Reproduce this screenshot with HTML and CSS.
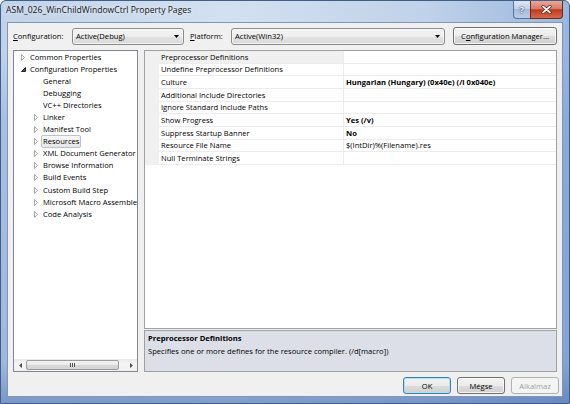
FILE: index.html
```html
<!DOCTYPE html>
<html>
<head>
<meta charset="utf-8">
<title>Property Pages</title>
<link rel="stylesheet" href="styles.css">
</head>
<body>
<div class="window">
  <div class="titlebar">
    <span class="title">ASM_026_WinChildWindowCtrl Property Pages</span>
    <div class="caption-btns">
      <div class="cbtn help">?</div>
      <div class="cbtn close">
        <svg width="11" height="9" viewBox="0 0 11 9"><path d="M2 1.5 L9 7.5 M9 1.5 L2 7.5" stroke="#5a1d12" stroke-width="3.2" stroke-linecap="round"/><path d="M2 1.5 L9 7.5 M9 1.5 L2 7.5" stroke="#ffffff" stroke-width="1.7" stroke-linecap="round"/></svg>
      </div>
    </div>
  </div>
  <div class="client">
    <div class="toprow">
      <span class="lbl lbl-config"><u>C</u>onfiguration:</span>
      <div class="combo combo-config"><span>Active(Debug)</span><svg class="dd" width="5" height="3" viewBox="0 0 5 3"><path d="M0 0 H5 L2.5 3 Z" fill="#000"/></svg></div>
      <span class="lbl lbl-platform"><u>P</u>latform:</span>
      <div class="combo combo-platform"><span>Active(Win32)</span><svg class="dd" width="5" height="3" viewBox="0 0 5 3"><path d="M0 0 H5 L2.5 3 Z" fill="#000"/></svg></div>
      <div class="btn cfgmgr">C<u>o</u>nfiguration Manager...</div>
    </div>
    <div class="main">
      <div class="tree">
        <div class="tree-items">
          <div class="ti l0"><span class="tw"><svg width="4" height="7" viewBox="0 0 4 7"><path d="M0.5 0.5 L3.5 3.5 L0.5 6.5 Z" fill="#fff" stroke="#a7a7a7"/></svg></span><span class="tt">Common Properties</span></div>
          <div class="ti l0"><span class="tw"><svg width="5" height="5" viewBox="0 0 5 5"><path d="M4.5 0.5 L4.5 4.5 L0.5 4.5 Z" fill="#4a4a4a" stroke="#262626"/></svg></span><span class="tt">Configuration Properties</span></div>
          <div class="ti l1"><span class="tw"></span><span class="tt">General</span></div>
          <div class="ti l1"><span class="tw"></span><span class="tt">Debugging</span></div>
          <div class="ti l1"><span class="tw"></span><span class="tt">VC++ Directories</span></div>
          <div class="ti l1"><span class="tw"><svg width="4" height="7" viewBox="0 0 4 7"><path d="M0.5 0.5 L3.5 3.5 L0.5 6.5 Z" fill="#fff" stroke="#a7a7a7"/></svg></span><span class="tt">Linker</span></div>
          <div class="ti l1"><span class="tw"><svg width="4" height="7" viewBox="0 0 4 7"><path d="M0.5 0.5 L3.5 3.5 L0.5 6.5 Z" fill="#fff" stroke="#a7a7a7"/></svg></span><span class="tt">Manifest Tool</span></div>
          <div class="ti l1"><span class="tw"><svg width="4" height="7" viewBox="0 0 4 7"><path d="M0.5 0.5 L3.5 3.5 L0.5 6.5 Z" fill="#fff" stroke="#a7a7a7"/></svg></span><span class="tt selected">Resources</span></div>
          <div class="ti l1"><span class="tw"><svg width="4" height="7" viewBox="0 0 4 7"><path d="M0.5 0.5 L3.5 3.5 L0.5 6.5 Z" fill="#fff" stroke="#a7a7a7"/></svg></span><span class="tt">XML Document Generator</span></div>
          <div class="ti l1"><span class="tw"><svg width="4" height="7" viewBox="0 0 4 7"><path d="M0.5 0.5 L3.5 3.5 L0.5 6.5 Z" fill="#fff" stroke="#a7a7a7"/></svg></span><span class="tt">Browse Information</span></div>
          <div class="ti l1"><span class="tw"><svg width="4" height="7" viewBox="0 0 4 7"><path d="M0.5 0.5 L3.5 3.5 L0.5 6.5 Z" fill="#fff" stroke="#a7a7a7"/></svg></span><span class="tt">Build Events</span></div>
          <div class="ti l1"><span class="tw"><svg width="4" height="7" viewBox="0 0 4 7"><path d="M0.5 0.5 L3.5 3.5 L0.5 6.5 Z" fill="#fff" stroke="#a7a7a7"/></svg></span><span class="tt">Custom Build Step</span></div>
          <div class="ti l1"><span class="tw"><svg width="4" height="7" viewBox="0 0 4 7"><path d="M0.5 0.5 L3.5 3.5 L0.5 6.5 Z" fill="#fff" stroke="#a7a7a7"/></svg></span><span class="tt">Microsoft Macro Assembler</span></div>
          <div class="ti l1"><span class="tw"><svg width="4" height="7" viewBox="0 0 4 7"><path d="M0.5 0.5 L3.5 3.5 L0.5 6.5 Z" fill="#fff" stroke="#a7a7a7"/></svg></span><span class="tt">Code Analysis</span></div>
        </div>
        <div class="hscroll">
          <div class="sarrow"><svg width="3" height="5" viewBox="0 0 3 5"><path d="M3 0 V5 L0 2.5 Z" fill="#4d4d4d"/></svg></div>
          <div class="thumb"><span class="grip"></span><span class="grip"></span><span class="grip"></span></div>
          <div class="strack"></div>
          <div class="sarrow"><svg width="3" height="5" viewBox="0 0 3 5"><path d="M0 0 V5 L3 2.5 Z" fill="#4d4d4d"/></svg></div>
        </div>
      </div>
      <div class="props">
        <div class="grid">
          <div class="row sel"><div class="gut"></div><div class="name">Preprocessor Definitions</div><div class="val"></div></div>
          <div class="row"><div class="gut"></div><div class="name">Undefine Preprocessor Definitions</div><div class="val"></div></div>
          <div class="row"><div class="gut"></div><div class="name">Culture</div><div class="val b">Hungarian (Hungary) (0x40e) (/l 0x040e)</div></div>
          <div class="row"><div class="gut"></div><div class="name">Additional Include Directories</div><div class="val"></div></div>
          <div class="row"><div class="gut"></div><div class="name">Ignore Standard Include Paths</div><div class="val"></div></div>
          <div class="row"><div class="gut"></div><div class="name">Show Progress</div><div class="val b">Yes (/v)</div></div>
          <div class="row"><div class="gut"></div><div class="name">Suppress Startup Banner</div><div class="val b">No</div></div>
          <div class="row"><div class="gut"></div><div class="name">Resource File Name</div><div class="val">$(IntDir)%(Filename).res</div></div>
          <div class="row"><div class="gut"></div><div class="name">Null Terminate Strings</div><div class="val"></div></div>
        </div>
        <div class="desc">
          <div class="desc-title">Preprocessor Definitions</div>
          <div class="desc-text">Specifies one or more defines for the resource compiler. (/d[macro])</div>
        </div>
      </div>
    </div>
    <div class="btnrow">
      <div class="btn ok">OK</div>
      <div class="btn">Mégse</div>
      <div class="btn disabled">Alkalmaz</div>
    </div>
  </div>
</div>
</body>
</html>
```

FILE: styles.css
```css
* { box-sizing: border-box; }
html, body { margin: 0; padding: 0; }
body {
  width: 570px;
  height: 404px;
  overflow: hidden;
  background: #ffffff;
  font-family: "Open Sans", "Noto Sans", sans-serif;
  font-size: 7.6px;
  color: #000;
}

.window {
  width: 570px;
  height: 404px;
  border: 1px solid #3f5e88;
  border-radius: 6px 6px 0 0;
  display: flex;
  flex-direction: column;
  background:
    linear-gradient(to bottom, rgba(80,120,190,0) 0%, rgba(80,120,190,0) 12%, rgba(90,130,195,0.25) 30%, rgba(80,120,190,0.3) 90%, rgba(60,100,170,0.55) 100%),
    linear-gradient(to right, #c2d3e9 0%, #d3e0ef 40%, #c0d2e9 75%, #9ab6dd 100%);
}

.titlebar {
  height: 21px;
  display: flex;
  align-items: flex-start;
  flex: none;
}
.title {
  font-size: 8.6px;
  line-height: 12px;
  padding: 3px 0 0 5px;
  color: #161616;
  text-shadow: 0 0 4px rgba(255,255,255,0.9);
}
.caption-btns {
  margin-left: auto;
  margin-right: 6px;
  display: flex;
}
.cbtn {
  height: 18px;
  display: flex;
  align-items: center;
  justify-content: center;
}
.help {
  width: 17px;
  border: 1px solid #58739a;
  border-top: none;
  border-right: none;
  border-radius: 0 0 0 4px;
  background: linear-gradient(to bottom, #dce6f3 0%, #c2d3e9 45%, #a5bcdc 50%, #b7cce6 100%);
  color: #fff;
  font-weight: bold;
  font-size: 9px;
  text-shadow: 0 0 2px #23385a, 0 0 1px #23385a;
}
.close {
  width: 33px;
  border: 1px solid #6e2a1f;
  border-top: none;
  border-radius: 0 0 4px 0;
  background: linear-gradient(to bottom, #e9a89a 0%, #d97b67 45%, #c23a22 52%, #d5694a 100%);
}

.client {
  flex: 1;
  margin: 0 6px 6px 6px;
  border: 1px solid #7f96b6;
  background: #f0f0f0;
  display: flex;
  flex-direction: column;
  padding: 4px 5px 0 5px;
}

.toprow {
  height: 18px;
  display: flex;
  align-items: center;
  flex: none;
}
.lbl { white-space: nowrap; }
.lbl-config { width: 59px; }
.lbl-platform { width: 41px; margin-left: 6px; }
.combo {
  height: 17px;
  border: 1px solid #8a8a8a;
  border-radius: 3px;
  background: linear-gradient(to bottom, #f5f5f5 0%, #ededed 50%, #e2e2e2 51%, #d9d9d9 100%);
  box-shadow: inset 0 0 0 1px rgba(255,255,255,0.7);
  display: flex;
  align-items: center;
  padding: 0 4px 0 3px;
}
.combo span { flex: 1; }
.combo-config { width: 112px; }
.combo-platform { width: 214px; }

.btn {
  height: 17px;
  border: 1px solid #707070;
  border-radius: 3px;
  background: linear-gradient(to bottom, #f3f3f3 0%, #ebebeb 50%, #dddddd 51%, #cfcfcf 100%);
  box-shadow: inset 0 0 0 1px rgba(255,255,255,0.75);
  display: flex;
  align-items: center;
  justify-content: center;
  white-space: nowrap;
  overflow: hidden;
}
.cfgmgr { width: 104px; height: 18px; margin-left: 8px; }

.main {
  margin-top: 5px;
  height: 322px;
  display: flex;
  gap: 6px;
  flex: none;
}

.tree {
  width: 125px;
  border: 1px solid #828790;
  background: #fff;
  display: flex;
  flex-direction: column;
  overflow: hidden;
}
.tree-items { flex: 1; overflow: hidden; }
.ti {
  height: 12.1px;
  display: flex;
  align-items: center;
  white-space: nowrap;
}
.ti.l0 { padding-left: 4px; }
.ti.l1 { padding-left: 17px; }
.tw {
  width: 12px;
  flex: none;
  display: flex;
  align-items: center;
  padding-left: 3px;
}
.tt { line-height: 11px; }
.tt.selected {
  margin-left: -2px;
  padding: 0 1px;
  border: 1px solid #b9c2cd;
  border-radius: 2px;
  background: linear-gradient(to bottom, #f8f8f8, #e6e6e6);
}

.hscroll {
  height: 12px;
  flex: none;
  display: flex;
  background: linear-gradient(to bottom, #e9e9e9, #f5f5f5 40%, #f0f0f0);
}
.sarrow {
  width: 12px;
  flex: none;
  display: flex;
  align-items: center;
  justify-content: center;
}
.thumb {
  width: 93px;
  margin: 1px 0;
  border: 1px solid #9b9b9b;
  border-radius: 2px;
  background: linear-gradient(to bottom, #f4f4f4 0%, #e8e8e8 50%, #d9d9d9 51%, #d3d3d3 100%);
  display: flex;
  align-items: center;
  justify-content: center;
  gap: 1px;
}
.grip {
  width: 1px;
  height: 4px;
  background: #555;
}
.strack { flex: 1; }

.props {
  width: 413px;
  display: flex;
  flex-direction: column;
  gap: 1px;
}
.grid {
  height: 279px;
  border: 1px solid #a0a0a0;
  background: #fff;
  flex: none;
}
.row {
  height: 12.67px;
  display: flex;
  white-space: nowrap;
}
.gut { width: 14px; background: #f0f0f0; flex: none; }
.name {
  width: 185px;
  flex: none;
  padding-left: 2px;
  border-right: 1px solid #ececec;
  border-bottom: 1px solid #ececec;
  display: flex;
  align-items: center;
  overflow: hidden;
}
.val {
  flex: 1;
  padding-left: 2px;
  border-bottom: 1px solid #ececec;
  display: flex;
  align-items: center;
  overflow: hidden;
}
.val.b { font-weight: bold; }
.row.sel .name { background: #f0f0f0; }

.desc {
  flex: 1;
  border: 1px solid #a0a0a0;
  background: #dcdfe7;
  padding: 1px 3px;
  line-height: 12.5px;
}
.desc-title { font-weight: bold; }

.btnrow {
  margin-top: 5px;
  margin-right: -2px;
  display: flex;
  justify-content: flex-end;
  gap: 6px;
  flex: none;
}
.btnrow .btn { width: 48px; }
.btn.ok {
  border-color: #3c7fb1;
  box-shadow: inset 0 0 0 1px #aee0f8;
}
.btn.disabled {
  border-color: #adb2b5;
  background: #f4f4f4;
  box-shadow: none;
  color: #a0a0a0;
}
```
